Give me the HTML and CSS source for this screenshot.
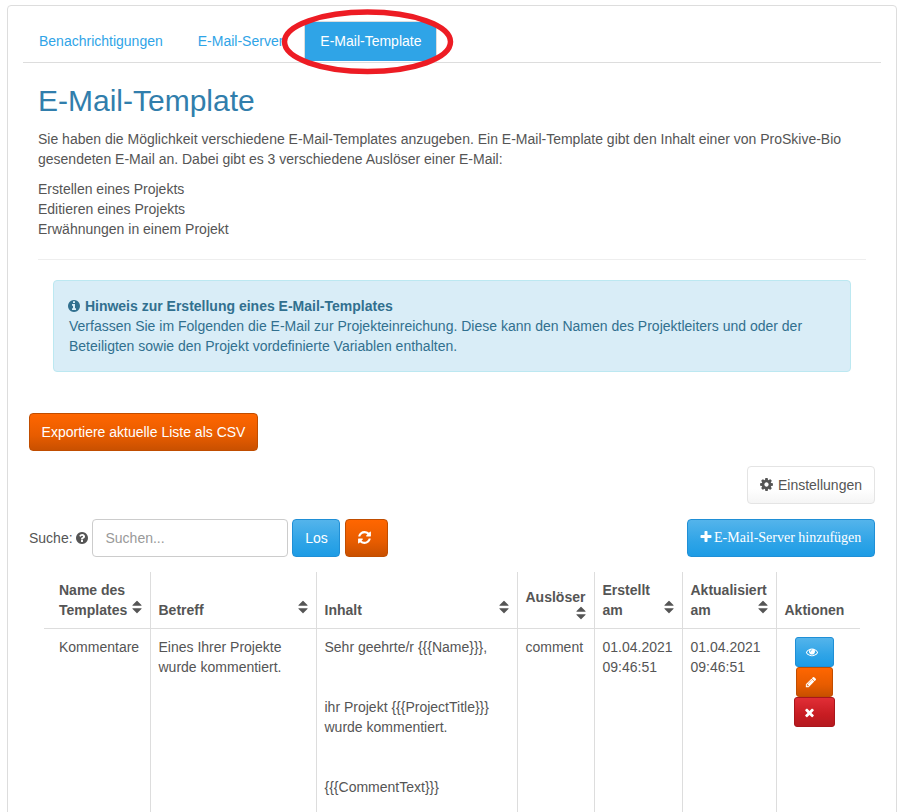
FILE: index.html
```html
<!DOCTYPE html>
<html lang="de">
<head>
    <meta charset="UTF-8">
    <meta name="viewport" content="width=device-width, initial-scale=1.0">
    <title>E-Mail-Template</title>
    <link rel="stylesheet" href="styles.css">
</head>
<body>
    <svg class="sprite" xmlns="http://www.w3.org/2000/svg">
        <symbol id="i-plus" viewBox="0 0 1792 1792"><path d="M1600 736v192q0 40-28 68t-68 28h-416v416q0 40-28 68t-68 28h-192q-40 0-68-28t-28-68v-416h-416q-40 0-68-28t-28-68v-192q0-40 28-68t68-28h416v-416q0-40 28-68t68-28h192q40 0 68 28t28 68v416h416q40 0 68 28t28 68z"/></symbol>
        <symbol id="i-times" viewBox="0 0 1792 1792"><path d="M1490 1322q0 40-28 68l-136 136q-28 28-68 28t-68-28l-294-294-294 294q-28 28-68 28t-68-28l-136-136q-28-28-28-68t28-68l294-294-294-294q-28-28-28-68t28-68l136-136q28-28 68-28t68 28l294 294 294-294q28-28 68-28t68 28l136 136q28 28 28 68t-28 68l-294 294 294 294q28 28 28 68z"/></symbol>
        <symbol id="i-info" viewBox="0 0 1792 1792"><path d="M1152 1376v-160q0-14-9-23t-23-9h-96v-512q0-14-9-23t-23-9h-320q-14 0-23 9t-9 23v160q0 14 9 23t23 9h96v320h-96q-14 0-23 9t-9 23v160q0 14 9 23t23 9h448q14 0 23-9t9-23zm-128-896v-160q0-14-9-23t-23-9h-192q-14 0-23 9t-9 23v160q0 14 9 23t23 9h192q14 0 23-9t9-23zm640 416q0 209-103 385.5t-279.5 279.5-385.5 103-385.5-103-279.5-279.5-103-385.5 103-385.5 279.5-279.5 385.5-103 385.5 103 279.5 279.5 103 385.5z"/></symbol>
        <symbol id="i-question" viewBox="0 0 1792 1792"><path d="M1024 1376v-192q0-14-9-23t-23-9h-192q-14 0-23 9t-9 23v192q0 14 9 23t23 9h192q14 0 23-9t9-23zm256-672q0-88-55.5-163t-138.5-116-170-41q-243 0-371 213-15 24 8 42l132 100q7 6 19 6 16 0 25-12 53-68 86-92 34-24 86-24 48 0 85.5 26t37.5 59q0 38-20 61t-68 45q-63 28-115.5 86.5t-52.5 125.5v36q0 14 9 23t23 9h192q14 0 23-9t9-23q0-19 21.5-49.5t54.5-49.5q32-18 49-28.5t46-35 44.5-48 28-60.5 12.5-81zm384 192q0 209-103 385.5t-279.5 279.5-385.5 103-385.5-103-279.5-279.5-103-385.5 103-385.5 279.5-279.5 385.5-103 385.5 103 279.5 279.5 103 385.5z"/></symbol>
        <symbol id="i-cog" viewBox="0 0 1792 1792"><path d="M1152 896q0-106-75-181t-181-75-181 75-75 181 75 181 181 75 181-75 75-181zm512-109v222q0 12-8 23t-20 13l-185 28q-19 54-39 91 35 50 107 138 10 12 10 25t-9 23q-27 37-99 108t-94 71q-12 0-26-9l-138-108q-44 23-91 38-16 136-29 186-7 28-36 28h-222q-14 0-24.5-8.5t-11.5-21.5l-28-184q-49-16-90-37l-141 107q-10 9-25 9-14 0-25-11-126-114-165-168-7-10-7-23 0-12 8-23 15-21 51-66.5t54-70.5q-27-50-41-99l-183-27q-13-2-21-12.5t-8-23.5v-222q0-12 8-23t19-13l186-28q14-46 39-92-40-57-107-138-10-12-10-24 0-10 9-23 26-36 98.5-107.5t94.5-71.5q13 0 26 10l138 107q44-23 91-38 16-136 29-186 7-28 36-28h222q14 0 24.5 8.5t11.5 21.5l28 184q49 16 90 37l142-107q9-9 24-9 13 0 25 10 129 119 165 170 7 8 7 22 0 12-8 23-15 21-51 66.5t-54 70.5q26 50 41 98l183 28q13 2 21 12.5t8 23.5z"/></symbol>
        <symbol id="i-eye" viewBox="0 0 1792 1792"><path d="M1664 960q-152-236-381-353 61 104 61 225 0 185-131.5 316.5t-316.5 131.5-316.5-131.5-131.5-316.5q0-121 61-225-229 117-381 353 133 205 333.5 326.5t434.5 121.5 434.5-121.5 333.5-326.5zm-720-384q0-20-14-34t-34-14q-125 0-214.5 89.5t-89.5 214.5q0 20 14 34t34 14 34-14 14-34q0-86 61-147t147-61q20 0 34-14t14-34zm848 384q0 34-20 69-140 230-376.5 368.5t-499.5 138.5-499.5-139-376.5-368q-20-35-20-69t20-69q140-229 376.5-368t499.5-139 499.5 139 376.5 368q20 35 20 69z"/></symbol>
        <symbol id="i-pencil" viewBox="0 0 1792 1792"><path d="M491 1536l91-91-235-235-91 91v107h128v128h107zm523-928q0-22-22-22-10 0-17 7l-542 542q-7 7-7 17 0 22 22 22 10 0 17-7l542-542q7-7 7-17zm-54-192l416 416-832 832h-416v-416zm683 96q0 53-37 90l-166 166-416-416 166-165q36-38 90-38 53 0 91 38l235 234q37 39 37 91z"/></symbol>
        <symbol id="i-refresh" viewBox="0 0 1792 1792"><path d="M1639 1056q0 5-1 7-64 268-268 434.5t-478 166.5q-146 0-282.5-55t-243.5-157l-129 129q-19 19-45 19t-45-19-19-45v-448q0-26 19-45t45-19h448q26 0 45 19t19 45-19 45l-137 137q71 66 161 102t187 36q134 0 250-65t186-179q11-17 53-117 8-23 30-23h192q13 0 22.5 9.5t9.5 22.5zm25-800v448q0 26-19 45t-45 19h-448q-26 0-45-19t-19-45 19-45l138-138q-148-137-349-137-134 0-250 65t-186 179q-11 17-53 117-8 23-30 23h-199q-13 0-22.5-9.5t-9.5-22.5v-7q65-268 270-434.5t480-166.5q146 0 284 55.5t245 156.5l130-129q19-19 45-19t45 19 19 45z"/></symbol>
        <symbol id="i-sort" viewBox="0 0 1792 1792"><path d="M1408 1088q0 26-19 45l-448 448q-19 19-45 19t-45-19l-448-448q-19-19-19-45t19-45 45-19h896q26 0 45 19t19 45zm0-384q0 26-19 45t-45 19h-896q-26 0-45-19t-19-45 19-45l448-448q19-19 45-19t45 19l448 448q19 19 19 45z"/></symbol>
    </svg>

    <div class="panel">
        <ul class="tabs">
            <li><a href="#">Benachrichtigungen</a></li>
            <li><a href="#">E-Mail-Server</a></li>
            <li class="active"><a href="#">E-Mail-Template</a></li>
        </ul>

        <div class="intro">
            <h1>E-Mail-Template</h1>
            <p>Sie haben die Möglichkeit verschiedene E-Mail-Templates anzugeben. Ein E-Mail-Template gibt den Inhalt einer von ProSkive-Bio gesendeten E-Mail an. Dabei gibt es 3 verschiedene Auslöser einer E-Mail:</p>
            <p>Erstellen eines Projekts<br>Editieren eines Projekts<br>Erwähnungen in einem Projekt</p>
            <hr>
            <div class="alert">
                <strong><svg class="icon icon-info"><use href="#i-info"/></svg> Hinweis zur Erstellung eines E-Mail-Templates</strong><br>
                Verfassen Sie im Folgenden die E-Mail zur Projekteinreichung. Diese kann den Namen des Projektleiters und oder der Beteiligten sowie den Projekt vordefinierte Variablen enthalten.
            </div>
        </div>

        <div class="export-row">
            <a class="btn btn-orange btn-export" href="#">Exportiere aktuelle Liste als CSV</a>
        </div>

        <div class="settings-row">
            <a class="btn btn-default" href="#"><svg class="icon icon-cog"><use href="#i-cog"/></svg> Einstellungen</a>
        </div>

        <div class="search-row">
            <label class="search-label">Suche: <svg class="icon icon-help"><use href="#i-question"/></svg></label>
            <input class="search-input" type="text" placeholder="Suchen...">
            <a class="btn btn-blue btn-los" href="#">Los</a>
            <a class="btn btn-orange btn-reload" href="#"><svg class="icon icon-reload"><use href="#i-refresh"/></svg></a>
            <a class="btn btn-blue btn-add" href="#"><svg class="icon icon-plus"><use href="#i-plus"/></svg>E-Mail-Server hinzufügen</a>
        </div>

        <table class="grid">
            <colgroup>
                <col class="c-name"><col class="c-subject"><col class="c-body"><col class="c-trigger"><col class="c-created"><col class="c-updated"><col class="c-actions">
            </colgroup>
            <thead>
                <tr>
                    <th>Name des Templates<svg class="sort"><use href="#i-sort"/></svg></th>
                    <th>Betreff<svg class="sort"><use href="#i-sort"/></svg></th>
                    <th>Inhalt<svg class="sort"><use href="#i-sort"/></svg></th>
                    <th class="th-trigger">Auslöser<svg class="sort"><use href="#i-sort"/></svg></th>
                    <th>Erstellt am<svg class="sort"><use href="#i-sort"/></svg></th>
                    <th>Aktualisiert am<svg class="sort"><use href="#i-sort"/></svg></th>
                    <th>Aktionen</th>
                </tr>
            </thead>
            <tbody>
                <tr>
                    <td>Kommentare</td>
                    <td>Eines Ihrer Projekte wurde kommentiert.</td>
                    <td>Sehr geehrte/r {{{Name}}},<br><br><br>ihr Projekt {{{ProjectTitle}}} wurde kommentiert.<br><br><br>{{{CommentText}}}<br><br><br><br></td>
                    <td>comment</td>
                    <td>01.04.2021 09:46:51</td>
                    <td>01.04.2021 09:46:51</td>
                    <td class="td-actions">
                        <a class="act act-view" href="#"><svg class="icon"><use href="#i-eye"/></svg></a>
                        <a class="act act-edit" href="#"><svg class="icon"><use href="#i-pencil"/></svg></a>
                        <a class="act act-del" href="#"><svg class="icon"><use href="#i-times"/></svg></a>
                    </td>
                </tr>
            </tbody>
        </table>
    </div>

    <!-- rote Markierung -->
    <svg class="marker" width="904" height="90" viewBox="0 0 904 90" xmlns="http://www.w3.org/2000/svg">
        <ellipse cx="367.5" cy="41.8" rx="83" ry="29.7" fill="none" stroke="#ed1c24" stroke-width="5.5"/>
    </svg>
</body>
</html>
```

FILE: styles.css
```css
html, body {
    height: 100%;
    overflow: hidden;
}

body {
    margin: 0;
    background-color: #fff;
    color: #555;
    font-family: "Liberation Sans", Arial, sans-serif;
    font-size: 14px;
    line-height: 20px;
}

a {
    text-decoration: none;
}

.sprite {
    display: none;
}

.icon {
    width: 14px;
    height: 14px;
    fill: currentColor;
    vertical-align: -2px;
}

.marker {
    position: absolute;
    left: 0;
    top: 0;
    pointer-events: none;
}

/* Rahmen */
.panel {
    margin: 5px 7px 0 7px;
    padding: 15px 15px 0 15px;
    border: 1px solid #ddd;
    border-radius: 4px;
    min-height: 900px;
}

/* Tabs */
.tabs {
    display: flex;
    height: 41px;
    margin: 0;
    padding: 0;
    list-style: none;
    border-bottom: 1px solid #ddd;
}

.tabs li {
    margin-right: 3px;
}

.tabs li:nth-child(2) {
    margin-right: 5px;
}

.tabs a {
    display: block;
    padding: 10px 16px;
    color: #2fa4e7;
}

.tabs .active a {
    height: 41px;
    box-sizing: border-box;
    padding: 9px 15px;
    background-color: #2fa4e7;
    border: 1px solid #ddd;
    border-bottom-color: transparent;
    background-clip: padding-box;
    color: #fff;
    border-radius: 4px 4px 0 0;
}

/* Einleitung */
.intro {
    padding: 0 15px;
}

h1 {
    margin: 20px 0 10px;
    color: #317eac;
    font-size: 30px;
    font-weight: 500;
    line-height: 36px;
}

p {
    margin: 0 0 10px;
}

hr {
    margin: 20px 0;
    border: 0;
    border-top: 1px solid #eee;
}

.alert {
    margin: 0 15px;
    padding: 15px;
    background-color: #d9edf7;
    border: 1px solid #bce8f1;
    border-radius: 4px;
    color: #31708f;
}

.icon-info {
    margin-left: -2px;
}

/* Buttons */
.btn {
    display: inline-block;
    box-sizing: border-box;
    height: 38px;
    padding: 8px 12px;
    border: 1px solid transparent;
    border-radius: 4px;
    text-align: center;
    white-space: nowrap;
}

.btn-orange {
    background-image: linear-gradient(#ff6600, #e75c00 60%, #c95000);
    border-color: #c04d00;
    color: #fff;
}

.btn-blue {
    background-image: linear-gradient(#54b4eb, #2fa4e7 60%, #1d9ce5);
    border-color: #1f8fd6;
    color: #fff;
}

.btn-default {
    background-image: linear-gradient(#fff, #fff 60%, #f5f5f5);
    border-color: #e4e4e4;
    color: #555;
}

.export-row {
    margin: 41px 0 0 6px;
}

.btn-export {
    width: 229px;
    padding-left: 0;
    padding-right: 0;
}

.settings-row {
    display: flex;
    justify-content: flex-end;
    margin: 15px 6px 0 0;
}

.icon-cog {
    width: 15px;
    height: 15px;
    margin-left: -1px;
    vertical-align: -2px;
}

.search-row {
    display: flex;
    align-items: center;
    margin: 15px 6px 0 6px;
}

.search-label {
    margin-right: 3px;
}

.icon-help {
    margin-left: -1px;
}

.search-input {
    box-sizing: border-box;
    width: 196px;
    height: 38px;
    padding: 8px 12px;
    border: 1px solid #ccc;
    border-radius: 4px;
    color: #555;
    font-family: inherit;
    font-size: 14px;
}

.search-input::placeholder {
    color: #999;
}

.btn-los {
    margin-left: 4px;
    width: 48px;
    padding-left: 0;
    padding-right: 0;
}

.btn-reload {
    margin-left: 5px;
    width: 43px;
    padding-left: 11px;
    padding-right: 0;
    text-align: left;
}

.icon-reload {
    width: 15px;
    height: 15px;
}

.btn-add {
    margin-left: auto;
    width: 188px;
    padding-left: 11px;
    padding-right: 0;
    text-align: left;
    font-family: "Liberation Serif", "Times New Roman", serif;
}

.icon-plus {
    margin-right: 1px;
}

/* Tabelle */
.grid {
    width: 816px;
    margin: 15px 0 0 21px;
    border-collapse: collapse;
    table-layout: fixed;
}

.c-name { width: 106px; }
.c-subject { width: 166px; }
.c-body { width: 201px; }
.c-trigger { width: 77px; }
.c-created { width: 88px; }
.c-updated { width: 94px; }
.c-actions { width: 84px; }

.grid th,
.grid td {
    padding: 8px;
    border-left: 1px solid #ddd;
    text-align: left;
    vertical-align: top;
}

.grid th:first-child,
.grid td:first-child {
    padding-left: 15px;
    border-left: 0;
}

.grid th {
    position: relative;
    vertical-align: bottom;
    border-bottom: 1px solid #ddd;
}

.grid .th-trigger {
    padding-bottom: 21px;
}

.sort {
    position: absolute;
    right: 5px;
    bottom: 13px;
    width: 16px;
    height: 16px;
    fill: #555;
}

.th-trigger .sort {
    bottom: 7px;
}

.grid .td-actions {
    padding-right: 16px;
}

.act {
    display: flex;
    align-items: center;
    box-sizing: border-box;
    height: 30px;
    margin: 0 auto;
    padding-left: 8px;
    border: 1px solid transparent;
    border-radius: 3px;
    color: #fff;
}

.act .icon {
    width: 12px;
    height: 12px;
}

.act-view {
    width: 39px;
    padding-left: 10px;
    background-image: linear-gradient(#54b4eb, #2fa4e7 60%, #1d9ce5);
    border-color: #1f8fd6;
}

.act-edit {
    width: 37px;
    background-image: linear-gradient(#ff6600, #e75c00 60%, #c95000);
    border-color: #c04d00;
}

.act-del {
    width: 41px;
    background-image: linear-gradient(#e12e36, #c71c22 60%, #b5191f);
    border-color: #a9161c;
}

.act-del .icon {
    width: 13px;
    height: 13px;
}
```
